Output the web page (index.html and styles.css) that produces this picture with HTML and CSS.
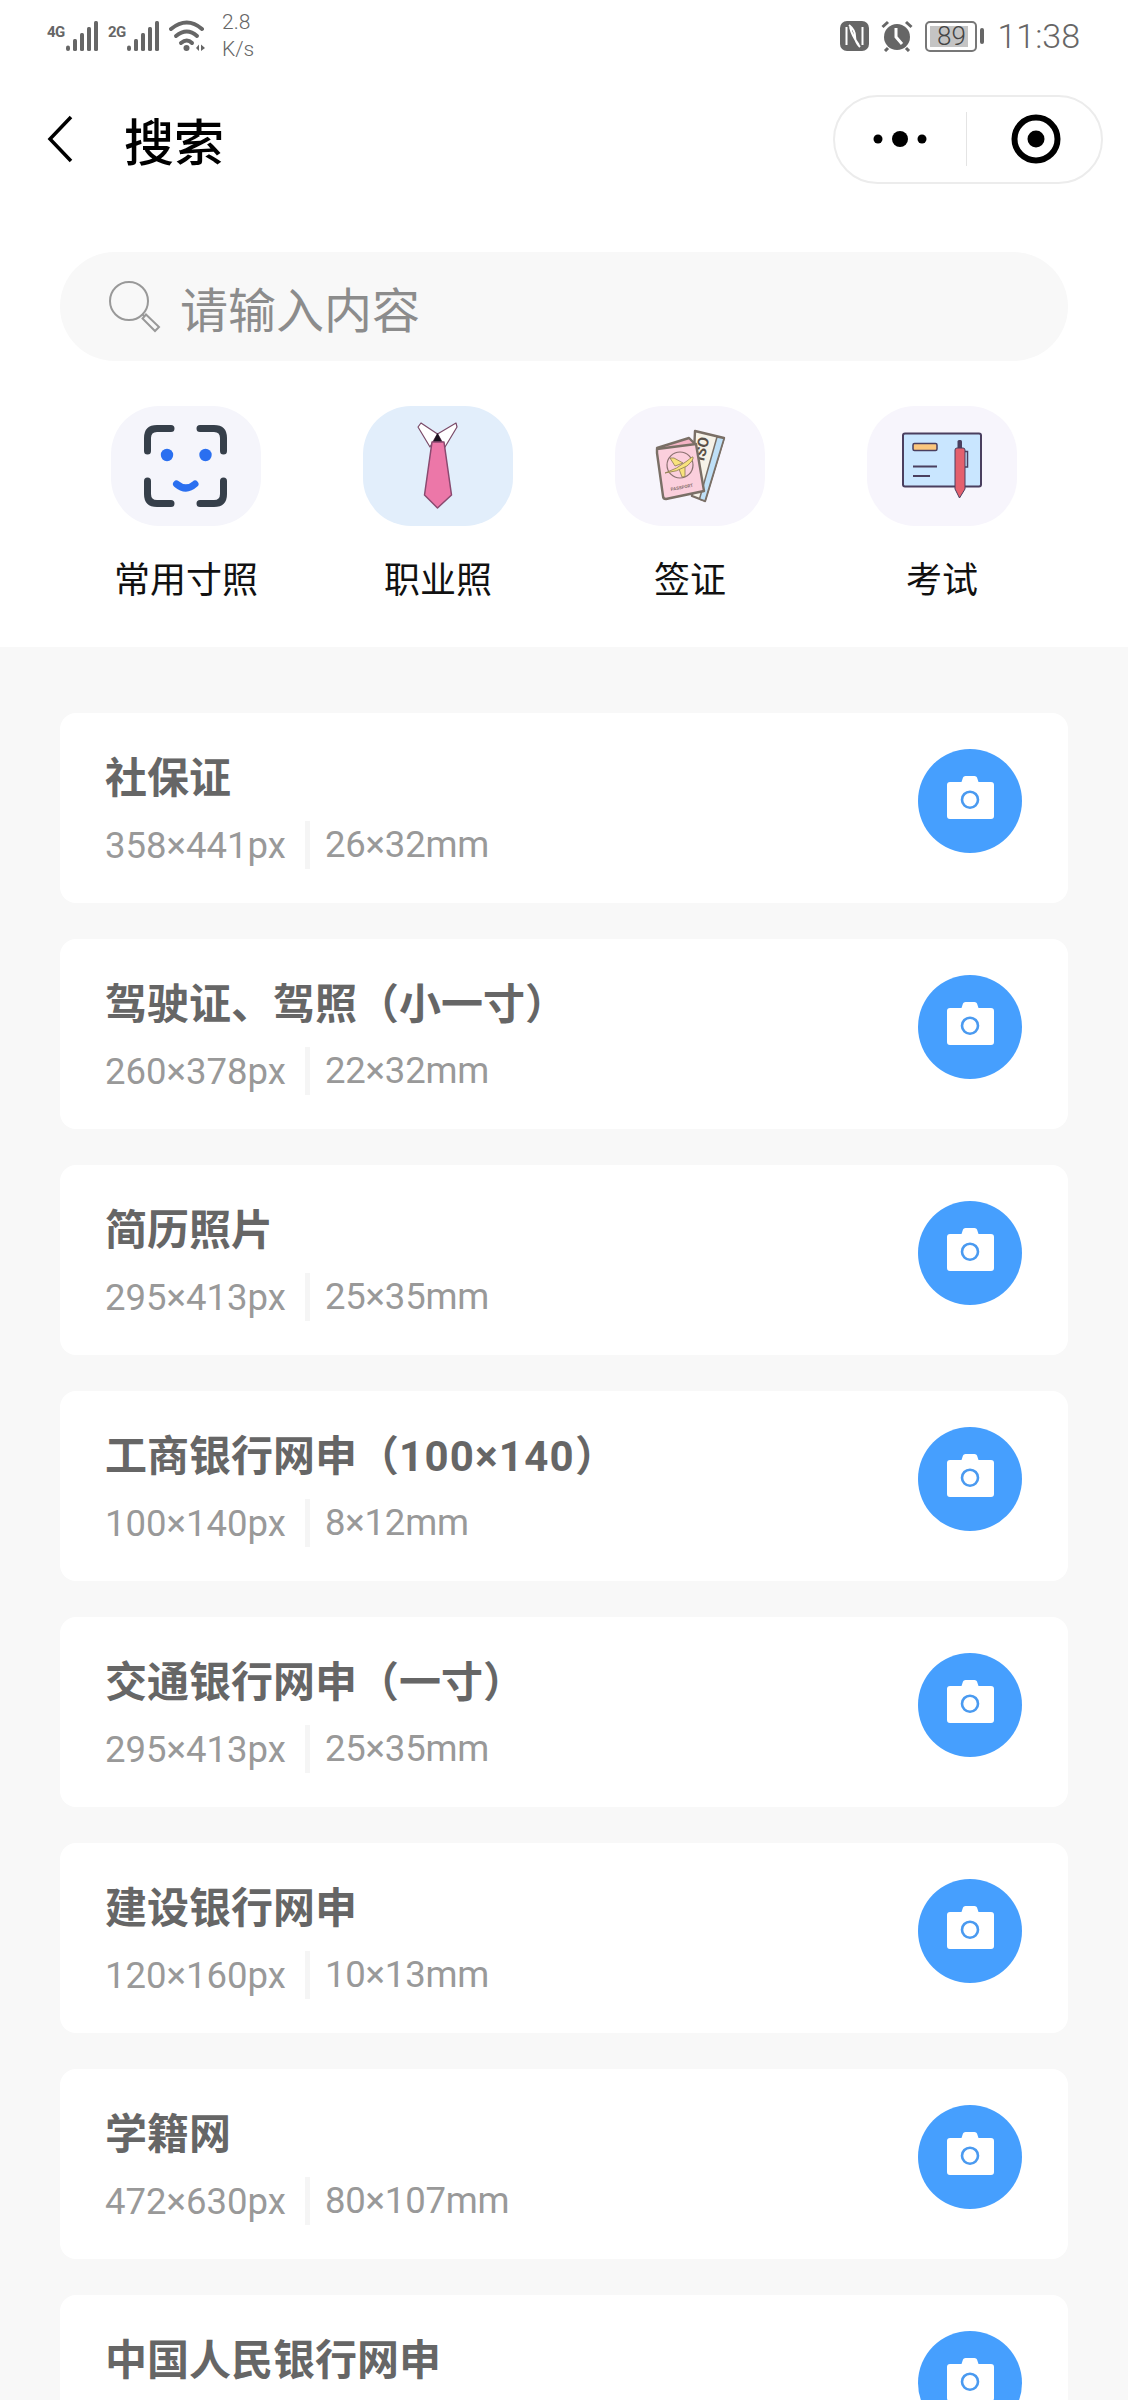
FILE: index.html
```html
<!DOCTYPE html>
<html lang="zh-CN">
<head>
    <meta charset="UTF-8">
    <meta name="viewport" content="width=device-width, initial-scale=1.0">
    <title>搜索</title>
    <link rel="stylesheet" href="styles.css">
</head>
<body>
    <svg class="defs" width="0" height="0">
        <symbol id="camera" viewBox="0 0 104 104">
            <circle cx="52" cy="52" r="52" fill="#469ffe"/>
            <path d="M32 33H43.5L45 28.5Q45.5 27 47.5 27H56.5Q58.5 27 59 28.5L60.5 33H73Q76 33 76 36V67Q76 70 73 70H32Q29 70 29 67V36Q29 33 32 33Z" fill="#fff"/>
            <circle cx="52" cy="50.7" r="8" fill="#fff" stroke="#4a9af0" stroke-width="2.6"/>
        </symbol>
        <symbol id="bars" viewBox="0 0 32 32">
            <rect x="0" y="25.5" width="4" height="5.5" rx="2" fill="#666"/>
            <rect x="7" y="19" width="4" height="12" rx="1.5" fill="#666"/>
            <rect x="14" y="13" width="4" height="18" rx="1.5" fill="#666"/>
            <rect x="21" y="7" width="4" height="24" rx="1.5" fill="#666"/>
            <rect x="28" y="1" width="4" height="30" rx="1.5" fill="#666"/>
        </symbol>
    </svg>

    <div class="top">
        <div class="status-bar">
            <div class="sim">
                <span class="net">4G</span>
                <svg width="32" height="32"><use href="#bars"/></svg>
            </div>
            <div class="sim">
                <span class="net">2G</span>
                <svg width="32" height="32"><use href="#bars"/></svg>
            </div>
            <svg width="36" height="32" viewBox="0 0 36 32">
                <g fill="none" stroke="#666" stroke-width="4" stroke-linecap="round">
                    <path d="M2 9Q18 -4 33 9"/>
                    <path d="M7 16Q18 7 28 16"/>
                    <path d="M12 23Q18 18 23 23"/>
                </g>
                <circle cx="17.500" cy="28" r="3" fill="#666"/>
                <path d="M27 28L30 24.500V31ZM32 24.500L36 28L32 31Z" fill="#666"/>
            </svg>
            <div class="speed">2.8<br>K/s</div>
            <div class="status-right">
                <svg width="29" height="30" viewBox="0 0 29 30">
                    <rect width="29" height="30" rx="7" fill="#666"/>
                    <path d="M6.500 6V24M22.500 6V24" stroke="#fff" stroke-width="2" fill="none"/>
                    <path d="M9 4Q15 9 15 15T20 26M10 6Q12 15 19 24" stroke="#fff" stroke-width="2" fill="none"/>
                </svg>
                <svg width="32" height="32" viewBox="0 0 32 32">
                    <circle cx="16" cy="17" r="13" fill="#666"/>
                    <path d="M1.500 7L7 2M30.500 7L25 2M7 28L4 31M25 28L28 31" stroke="#666" stroke-width="3" fill="none"/>
                    <path d="M15 8V17L21 24" stroke="#fff" stroke-width="3" fill="none"/>
                </svg>
                <div class="battery">
                    <div class="battery-box">
                        <div class="battery-fill" style="width: 89%"></div>
                        <span>89</span>
                    </div>
                    <div class="battery-nub"></div>
                </div>
                <span class="time">11:38</span>
            </div>
        </div>

        <div class="nav">
            <svg class="back" width="26" height="48" viewBox="0 0 26 48">
                <path d="M24 2L3 24L24 46" fill="none" stroke="#000" stroke-width="3.500"/>
            </svg>
            <span class="nav-title">搜索</span>
            <div class="capsule">
                <div class="capsule-part">
                    <svg width="60" height="20" viewBox="0 0 60 20">
                        <circle cx="8" cy="10" r="4.500"/>
                        <circle cx="30" cy="10" r="8"/>
                        <circle cx="52" cy="10" r="4.500"/>
                    </svg>
                </div>
                <div class="capsule-part">
                    <svg width="52" height="52" viewBox="0 0 52 52">
                        <circle cx="26" cy="26" r="21.500" fill="none" stroke="#000" stroke-width="6"/>
                        <circle cx="26" cy="26" r="8.500"/>
                    </svg>
                </div>
            </div>
        </div>

        <div class="search">
            <svg width="52" height="52" viewBox="0 0 52 52">
                <circle cx="20" cy="20" r="19" fill="none" stroke="#999" stroke-width="2"/>
                <path d="M33 33L36 36M37 33.500L50 46L46 50L33.500 37.500Z" fill="none" stroke="#999" stroke-width="2"/>
            </svg>
            <span>请输入内容</span>
        </div>

        <div class="categories">
            <div class="category">
                <div class="tile">
                    <svg width="149" height="120" viewBox="0 0 149 120">
                        <g fill="none" stroke="#363f4a" stroke-width="7" stroke-linecap="round">
                            <path d="M36.500 45V32Q36.500 22.500 46 22.500H60"/>
                            <path d="M89 22.500H103Q112.500 22.500 112.500 32V45"/>
                            <path d="M36.500 75V88Q36.500 97.500 46 97.500H60"/>
                            <path d="M89 97.500H103Q112.500 97.500 112.500 88V75"/>
                        </g>
                        <circle cx="56" cy="49" r="6.200" fill="#2a6ff0"/>
                        <circle cx="94.500" cy="49" r="6.200" fill="#2a6ff0"/>
                        <path d="M65.500 78Q75 86 84 78" fill="none" stroke="#2a6ff0" stroke-width="7" stroke-linecap="round"/>
                    </svg>
                </div>
                <span>常用寸照</span>
            </div>
            <div class="category">
                <div class="tile tile-blue">
                    <svg width="149" height="120" viewBox="0 0 149 120">
                        <g fill="#fff" stroke="#7a4a68" stroke-width="1.200" stroke-linejoin="round">
                            <path d="M55 21L58 17L74.500 28L67 41Z"/>
                            <path d="M94 21L93 17L74.500 28L82 41Z"/>
                        </g>
                        <path d="M74.500 27L79 36H70Z" fill="#1c1420"/>
                        <path d="M69 36H81L88.500 89L74.500 102L61.500 89Z" fill="#ec77a8" stroke="#8a4a70" stroke-width="1.500" stroke-linejoin="round"/>
                    </svg>
                </div>
                <span>职业照</span>
            </div>
            <div class="category">
                <div class="tile tile-lilac">
                    <svg width="149" height="120" viewBox="0 0 149 120">
                        <path d="M80 25L109 32L90 95L77 90Z" fill="#f6f2e8" stroke="#7a6f66" stroke-width="2.400" stroke-linejoin="round"/>
                        <path d="M102 31L109 32.500L90 95L84.500 93Z" fill="#bfe0f7" stroke="#7a6f66" stroke-width="1.500" stroke-linejoin="round"/>
                        <text class="ticket-no" transform="translate(84 30) rotate(103)">OSI</text>
                        <path d="M42 42L74 32L81 39L50 50Z" fill="#f4b3c5" stroke="#7a6f66" stroke-width="2.400" stroke-linejoin="round"/>
                        <path d="M42 43L81 38L89 85L51 93Q48 93 48 90L42 47Z" fill="#fbcfdc" stroke="#7a6f66" stroke-width="2.400" stroke-linejoin="round"/>
                        <circle cx="65" cy="59" r="13" fill="none" stroke="#8a7070" stroke-width="1.200"/>
                        <g fill="#f8e27c" stroke="#8a7a50" stroke-width="0.800" stroke-linejoin="round">
                            <path d="M60 60L55 52L59 52L68 57Z"/>
                            <path d="M64 63L67 71L70 70.500L70 59Z"/>
                            <path d="M50 67Q62 63 72 55Q78 50 78 51Q79 54 72 60Q62 66 50 67Z"/>
                        </g>
                        <text class="passport" transform="translate(56 85) rotate(-11)">PASSPORT</text>
                    </svg>
                </div>
                <span>签证</span>
            </div>
            <div class="category">
                <div class="tile tile-lilac">
                    <svg width="149" height="120" viewBox="0 0 149 120">
                        <rect x="36" y="27.500" width="78" height="53" rx="2" fill="#c9e6ff" stroke="#4a3f5f" stroke-width="2"/>
                        <rect x="46" y="37.500" width="24" height="7" rx="1.500" fill="#fbc77e" stroke="#4a3f5f" stroke-width="1.500"/>
                        <path d="M46 60.500H70M46 70H63" stroke="#4a3f5f" stroke-width="2"/>
                        <rect x="90.500" y="34" width="4.500" height="10" rx="1.500" fill="#4a3f5f"/>
                        <path d="M98 45.500H100.500V61H98" fill="none" stroke="#4a3f5f" stroke-width="1.500"/>
                        <path d="M88 44Q88 42 90 42H96Q98 42 98 44V83L92.500 92L88 83Z" fill="#e4606d" stroke="#4a3f5f" stroke-width="1"/>
                    </svg>
                </div>
                <span>考试</span>
            </div>
        </div>
    </div>

    <div class="list">
        <div class="card">
            <div class="card-text">
                <div class="card-title">社保证</div>
                <div class="card-size"><span>358×441px</span><span class="mm">26×32mm</span></div>
            </div>
            <svg class="shot" width="104" height="104"><use href="#camera"/></svg>
        </div>
        <div class="card">
            <div class="card-text">
                <div class="card-title">驾驶证、驾照（小一寸）</div>
                <div class="card-size"><span>260×378px</span><span class="mm">22×32mm</span></div>
            </div>
            <svg class="shot" width="104" height="104"><use href="#camera"/></svg>
        </div>
        <div class="card">
            <div class="card-text">
                <div class="card-title">简历照片</div>
                <div class="card-size"><span>295×413px</span><span class="mm">25×35mm</span></div>
            </div>
            <svg class="shot" width="104" height="104"><use href="#camera"/></svg>
        </div>
        <div class="card">
            <div class="card-text">
                <div class="card-title">工商银行网申（<span class="digits">100×140</span>）</div>
                <div class="card-size"><span>100×140px</span><span class="mm">8×12mm</span></div>
            </div>
            <svg class="shot" width="104" height="104"><use href="#camera"/></svg>
        </div>
        <div class="card">
            <div class="card-text">
                <div class="card-title">交通银行网申（一寸）</div>
                <div class="card-size"><span>295×413px</span><span class="mm">25×35mm</span></div>
            </div>
            <svg class="shot" width="104" height="104"><use href="#camera"/></svg>
        </div>
        <div class="card">
            <div class="card-text">
                <div class="card-title">建设银行网申</div>
                <div class="card-size"><span>120×160px</span><span class="mm">10×13mm</span></div>
            </div>
            <svg class="shot" width="104" height="104"><use href="#camera"/></svg>
        </div>
        <div class="card">
            <div class="card-text">
                <div class="card-title">学籍网</div>
                <div class="card-size"><span>472×630px</span><span class="mm">80×107mm</span></div>
            </div>
            <svg class="shot" width="104" height="104"><use href="#camera"/></svg>
        </div>
        <div class="card">
            <div class="card-text">
                <div class="card-title">中国人民银行网申</div>
            </div>
            <svg class="shot" width="104" height="104"><use href="#camera"/></svg>
        </div>
    </div>
</body>
</html>
```

FILE: styles.css
```css
html, body {
    margin: 0;
    height: 2400px;
    overflow: hidden;
}
body {
    font-family: Roboto, "Noto Sans CJK SC", sans-serif;
    background-color: #f8f8f8;
}
svg {
    display: block;
}
.defs {
    position: absolute;
}
.top {
    background-color: #fff;
    padding-bottom: 46px;
}

/* status bar */
.status-bar {
    display: flex;
    align-items: center;
    height: 72px;
    padding: 0 48px 0 47px;
    color: #666;
}
.sim {
    display: flex;
    gap: 1px;
    margin-right: 10px;
}
.net {
    width: 18px;
    font-size: 15px;
    line-height: 24px;
    font-weight: 700;
    letter-spacing: -0.500px;
}
.speed {
    margin-left: 17px;
    font-size: 21px;
    line-height: 27px;
    font-weight: 300;
}
.status-right {
    display: flex;
    align-items: center;
    gap: 12px;
    margin-left: auto;
}
.battery {
    display: flex;
    align-items: center;
    gap: 3px;
}
.battery-box {
    position: relative;
    box-sizing: border-box;
    width: 52px;
    height: 31px;
    padding: 3px;
    border: 2px solid #777;
    border-radius: 5px;
}
.battery-fill {
    height: 100%;
    background-color: #c4c4c4;
}
.battery-box span {
    position: absolute;
    top: 0;
    left: 0;
    width: 100%;
    font-size: 26px;
    line-height: 27px;
    font-weight: 300;
    text-align: center;
    color: #444;
}
.battery-nub {
    width: 4px;
    height: 16px;
    border-radius: 2px;
    background-color: #666;
}
.time {
    margin-left: 1px;
    font-size: 34px;
    font-weight: 300;
}

/* nav */
.nav {
    display: flex;
    align-items: center;
    height: 134px;
    padding: 0 25px 0 47px;
}
.back {
    margin-right: 51px;
}
.nav-title {
    font-size: 50px;
    font-weight: 500;
    color: #000;
}
.capsule {
    display: flex;
    align-items: center;
    box-sizing: border-box;
    width: 270px;
    height: 89px;
    margin-left: auto;
    border: 2px solid #ececec;
    border-radius: 45px;
}
.capsule-part {
    display: flex;
    justify-content: center;
    align-items: center;
    height: 54px;
}
.capsule-part:first-child {
    width: 132px;
    border-right: 1px solid #e4e4e4;
}
.capsule-part:last-child {
    width: 136px;
    padding-left: 4px;
    box-sizing: border-box;
}

/* search */
.search {
    display: flex;
    align-items: center;
    gap: 19px;
    height: 109px;
    margin: 46px 60px 0;
    padding-left: 49px;
    border-radius: 55px;
    background-color: #f8f8f8;
    font-size: 48px;
    color: #8c8c8c;
}

/* categories */
.categories {
    display: grid;
    grid-template-columns: repeat(4, 1fr);
    margin: 45px 60px 0;
}
.category {
    display: flex;
    flex-direction: column;
    align-items: center;
    font-size: 36px;
    line-height: 40px;
    color: #111;
}
.tile {
    width: 150px;
    height: 120px;
    margin-bottom: 35px;
    border-radius: 48px;
    background-color: #f5f5fb;
}
.tile-blue {
    background-color: #e2eefb;
}
.tile-lilac {
    background-color: #f7f5fc;
}
.passport {
    font-size: 4.500px;
    font-weight: 700;
    fill: #8a7070;
}
.ticket-no {
    font-size: 15px;
    font-weight: 700;
    fill: #5a5048;
}

/* cards */
.list {
    display: flex;
    flex-direction: column;
    gap: 36px;
    padding: 66px 60px 0;
}
.card {
    display: flex;
    flex-shrink: 0;
    justify-content: space-between;
    box-sizing: border-box;
    height: 190px;
    padding: 36px 46px 0 45px;
    border-radius: 16px;
    background-color: #fff;
}
.card-title {
    margin-top: 6px;
    font-size: 42px;
    line-height: 48px;
    font-weight: 700;
    color: #666;
}
.digits {
    letter-spacing: 1.300px;
}
.card-size {
    display: flex;
    align-items: center;
    height: 48px;
    margin-top: 18px;
    font-size: 36.500px;
    color: #999;
}
.mm {
    margin-left: 19px;
    padding-left: 15px;
    border-left: 5px solid #f5f5f5;
    line-height: 48px;
    letter-spacing: -0.200px;
}
```
